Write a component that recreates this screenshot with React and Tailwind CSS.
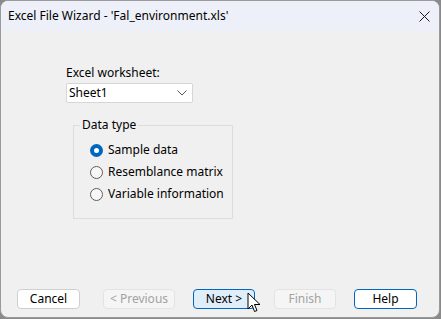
const font = { fontFamily: '"Segoe UI", "Noto Sans", "Liberation Sans", sans-serif' };

const Radio = ({ checked, label }) => (
  <div className="flex h-[22px] items-center">
    <span
      className={`flex h-[13px] w-[13px] items-center justify-center rounded-full ${
        checked ? "bg-[#0067c0]" : "border border-[#5d5d5d] bg-[#f7f7f7]"
      }`}
    >
      {checked ? <span className="h-[5px] w-[5px] rounded-full bg-white" /> : null}
    </span>
    <span className="ml-[5px] text-[12px] text-black">{label}</span>
  </div>
);

const Button = ({ label, variant = "normal" }) => {
  const styles = {
    normal: "border-[#cfcfcf] bg-white text-black",
    disabled: "border-[#e3e3e3] bg-[#f5f5f5] text-[#a2a2a2]",
    hover: "border-[#0067c0] bg-[#e0eef9] text-black",
    default: "border-[#0067c0] bg-white text-black",
  };
  return (
    <div
      className={`flex h-[20px] items-center justify-center rounded-[4px] border text-[12px] ${styles[variant]}`}
    >
      {label}
    </div>
  );
};

export default function App() {
  return (
    <div className="h-[319px] w-[441px] bg-[#8a8a8a]" style={font}>
      <div className="flex h-[318px] w-[440px] flex-col overflow-hidden rounded-[8px] border border-[#9a9a9a] bg-[#f0f0f0]">
        <div className="flex h-[30px] shrink-0 items-center justify-between bg-[#eef0f9] pl-[7px] pr-[9px]">
          <span className="text-[12px] text-black">Excel File Wizard - 'Fal_environment.xls'</span>
          <svg width="11" height="11" viewBox="0 0 11 11">
            <path d="M0.5 0.5 L10.5 10.5 M10.5 0.5 L0.5 10.5" stroke="#1a1a1a" strokeWidth="1" />
          </svg>
        </div>

        <div className="flex flex-1 flex-col">
          <div className="ml-[65px] mt-[34px] text-[12px] leading-[16px] text-black">Excel worksheet:</div>
          <div className="ml-[65px] mt-[2px] flex h-[20px] w-[127px] items-center justify-between rounded-[2px] border border-[#d6d6d6] bg-white pl-[2px] pr-[5px] text-[12px] text-black">
            <span>Sheet1</span>
            <svg width="10" height="6" viewBox="0 0 10 6">
              <path d="M0.5 0.5 L5 5 L9.5 0.5" fill="none" stroke="#5a5a5a" strokeWidth="1" />
            </svg>
          </div>

          <div className="relative ml-[72px] mt-[22px] h-[94px] w-[160px] border border-[#dcdcdc]">
            <span className="absolute left-[6px] top-[-9px] bg-[#f0f0f0] px-[2px] text-[12px] leading-[16px] text-black">
              Data type
            </span>
            <div className="ml-[16px] mt-[13px] flex flex-col">
              <Radio checked label="Sample data" />
              <Radio label="Resemblance matrix" />
              <Radio label="Variable information" />
            </div>
          </div>

          <div className="relative mt-auto mb-[8px] flex items-center">
            <div className="ml-[16px] w-[63px]">
              <Button label="Cancel" />
            </div>
            <div className="ml-[23px] w-[72px]">
              <Button label="< Previous" variant="disabled" />
            </div>
            <div className="ml-[18px] w-[62px]">
              <Button label="Next >" variant="hover" />
            </div>
            <div className="ml-[19px] w-[62px]">
              <Button label="Finish" variant="disabled" />
            </div>
            <div className="ml-[18px] w-[63px]">
              <Button label="Help" variant="default" />
            </div>
            <svg
              className="absolute left-[246px] top-[3px]"
              width="14"
              height="22"
              viewBox="0 0 14 22"
            >
              <path
                d="M1 1 L1 17 L5 13 L7.5 19.5 L10 18.5 L7.5 12.5 L13 12.5 Z"
                fill="#ffffff"
                stroke="#000000"
                strokeWidth="1"
                strokeLinejoin="round"
              />
            </svg>
          </div>
        </div>
      </div>
    </div>
  );
}
